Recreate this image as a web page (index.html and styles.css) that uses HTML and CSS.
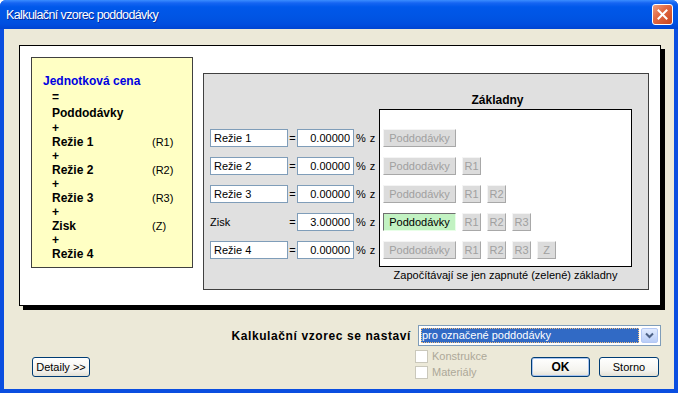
FILE: index.html
```html
<!DOCTYPE html>
<html lang="cs">
<head>
    <meta charset="UTF-8">
    <title>Kalkulační vzorec poddodávky</title>
    <link rel="stylesheet" href="styles.css">
</head>
<body>
<div class="window">
    <!-- Title bar -->
    <div class="titlebar">
        <span class="title">Kalkulační vzorec poddodávky</span>
        <span class="close-btn">
            <svg width="11" height="11" viewBox="0 0 11 11"><path d="M1.5 1.5 L9.5 9.5 M9.5 1.5 L1.5 9.5" stroke="#fff" stroke-width="2" stroke-linecap="square"/></svg>
        </span>
    </div>

    <div class="client">
        <div class="sheet">
            <!-- Formula overview -->
            <div class="formula">
                <div class="f-head">Jednotková cena</div>
                <div class="f-line f-gap">=</div>
                <div class="f-line f-gap">Poddodávky</div>
                <div class="f-line">+</div>
                <div class="f-line"><span class="f-name">Režie 1</span><span class="f-tag">(R1)</span></div>
                <div class="f-line">+</div>
                <div class="f-line"><span class="f-name">Režie 2</span><span class="f-tag">(R2)</span></div>
                <div class="f-line">+</div>
                <div class="f-line"><span class="f-name">Režie 3</span><span class="f-tag">(R3)</span></div>
                <div class="f-line">+</div>
                <div class="f-line"><span class="f-name">Zisk</span><span class="f-tag">(Z)</span></div>
                <div class="f-line">+</div>
                <div class="f-line">Režie 4</div>
            </div>

            <!-- Parameters -->
            <div class="params">
                <div class="param-rows">
                    <div class="prow">
                        <input class="name" type="text" value="Režie 1" readonly>
                        <span class="eq">=</span>
                        <input class="val" type="text" value="0.00000" readonly>
                        <span class="unit">% z</span>
                    </div>
                    <div class="prow">
                        <input class="name" type="text" value="Režie 2" readonly>
                        <span class="eq">=</span>
                        <input class="val" type="text" value="0.00000" readonly>
                        <span class="unit">% z</span>
                    </div>
                    <div class="prow">
                        <input class="name" type="text" value="Režie 3" readonly>
                        <span class="eq">=</span>
                        <input class="val" type="text" value="0.00000" readonly>
                        <span class="unit">% z</span>
                    </div>
                    <div class="prow">
                        <span class="name-label">Zisk</span>
                        <span class="eq">=</span>
                        <input class="val" type="text" value="3.00000" readonly>
                        <span class="unit">% z</span>
                    </div>
                    <div class="prow">
                        <input class="name" type="text" value="Režie 4" readonly>
                        <span class="eq">=</span>
                        <input class="val" type="text" value="0.00000" readonly>
                        <span class="unit">% z</span>
                    </div>
                </div>

                <div class="bases">
                    <div class="bases-head">Základny</div>
                    <div class="bases-box">
                        <div class="brow">
                            <span class="bbtn wide">Poddodávky</span>
                        </div>
                        <div class="brow">
                            <span class="bbtn wide">Poddodávky</span>
                            <span class="bbtn">R1</span>
                        </div>
                        <div class="brow">
                            <span class="bbtn wide">Poddodávky</span>
                            <span class="bbtn">R1</span>
                            <span class="bbtn">R2</span>
                        </div>
                        <div class="brow">
                            <span class="bbtn wide on">Poddodávky</span>
                            <span class="bbtn">R1</span>
                            <span class="bbtn">R2</span>
                            <span class="bbtn">R3</span>
                        </div>
                        <div class="brow">
                            <span class="bbtn wide">Poddodávky</span>
                            <span class="bbtn">R1</span>
                            <span class="bbtn">R2</span>
                            <span class="bbtn">R3</span>
                            <span class="bbtn">Z</span>
                        </div>
                    </div>
                    <div class="bases-note">Započítávají se jen zapnuté (zelené) základny</div>
                </div>
            </div>
        </div>

        <!-- Mode selection -->
        <div class="mode-row">
            <span class="mode-label">Kalkulační vzorec se nastaví</span>
            <div class="select">
                <span class="select-value">pro označené poddodávky</span>
                <span class="select-arrow">
                    <svg width="9" height="7" viewBox="0 0 9 7"><path d="M1 1.5 L4.5 5 L8 1.5" fill="none" stroke="#4d6185" stroke-width="2"/></svg>
                </span>
            </div>
        </div>

        <div class="action-row">
            <button class="xp-btn details">Detaily &gt;&gt;</button>
            <div class="checks">
                <div class="check"><span class="box"></span>Konstrukce</div>
                <div class="check"><span class="box"></span>Materiály</div>
            </div>
            <button class="xp-btn ok">OK</button>
            <button class="xp-btn storno">Storno</button>
        </div>
    </div>
</div>
</body>
</html>
```

FILE: styles.css
```css
* {
    margin: 0;
    padding: 0;
    box-sizing: border-box;
}

body {
    width: 678px;
    height: 393px;
    background-color: #ffffff;
    font-family: 'Liberation Sans', Arial, sans-serif;
    font-size: 11px;
    color: #000;
    overflow: hidden;
}

/* Window frame */
.window {
    width: 678px;
    height: 393px;
    display: flex;
    flex-direction: column;
    background-color: #0a4ee0;
    border-radius: 6px 6px 0 0;
    overflow: hidden;
}

.titlebar {
    height: 29px;
    display: flex;
    align-items: center;
    justify-content: space-between;
    padding: 0 5px 0 6px;
    background: linear-gradient(#3b8dff 0px, #1665f2 3px, #0058ea 7px, #0054e3 18px, #004ee0 24px, #0044d2 29px);
}

.title {
    color: #ffffff;
    font-size: 12.5px;
    letter-spacing: -0.6px;
    text-shadow: 1px 1px 0 #0a2a9a;
}

.close-btn {
    width: 21px;
    height: 21px;
    display: flex;
    align-items: center;
    justify-content: center;
    border: 1px solid #ffffff;
    border-radius: 3px;
    background: linear-gradient(135deg, #f0a080 0%, #e26a44 40%, #c9451e 100%);
}

.client {
    flex: 1;
    margin: 0 4px 4px 4px;
    background-color: #ece9d8;
    display: flex;
    flex-direction: column;
}

/* White sheet with shadow */
.sheet {
    margin: 16px 0 0 15px;
    width: 642px;
    height: 261px;
    padding: 11px;
    display: flex;
    align-items: flex-start;
    background-color: #ffffff;
    border: 1px solid #000;
    box-shadow: 4px 4px 0 #000;
}

/* Yellow formula box */
.formula {
    width: 162px;
    height: 211px;
    padding: 15px 0 0 11px;
    background-color: #ffffc4;
    border: 1px solid #404040;
    font-size: 12px;
    font-weight: bold;
    line-height: 14px;
}

.f-head {
    color: #0000e0;
    line-height: 16px;
}

.f-line {
    display: flex;
    padding-left: 9px;
}

.f-gap {
    line-height: 16px;
}

.f-name {
    width: 100px;
}

.f-tag {
    font-size: 11px;
    font-weight: normal;
}

/* Gray parameters panel */
.params {
    margin: 16px 0 0 10px;
    width: 446px;
    height: 217px;
    padding: 0 15px 0 6px;
    display: flex;
    background-color: #e0e0e0;
    border: 1px solid #404040;
}

.param-rows {
    width: 163px;
    flex-shrink: 0;
    padding-top: 55px;
    display: flex;
    flex-direction: column;
    gap: 10px;
}

.prow {
    height: 18px;
    display: flex;
    align-items: center;
    white-space: nowrap;
}

.prow input {
    flex-shrink: 0;
    height: 18px;
    padding: 0 3px;
    border: 1px solid #7f9db9;
    background-color: #ffffff;
    font-family: 'Liberation Sans', Arial, sans-serif;
    font-size: 11px;
    color: #000;
    outline: none;
}

.name {
    width: 78px;
}

.name-label {
    width: 78px;
    flex-shrink: 0;
}

.eq {
    width: 9px;
    flex-shrink: 0;
    text-align: center;
}

.val {
    width: 57px;
    text-align: right;
}

.unit {
    margin-left: 2px;
    flex-shrink: 0;
    word-spacing: 1px;
}

.bases {
    margin-left: 6px;
    width: 253px;
    flex-shrink: 0;
    padding-top: 18px;
}

.bases-head {
    height: 17px;
    padding-right: 16px;
    text-align: center;
    font-weight: bold;
    font-size: 12px;
    line-height: 16px;
}

.bases-box {
    height: 158px;
    padding: 19px 0 0 3px;
    display: flex;
    flex-direction: column;
    gap: 10px;
    background-color: #ffffff;
    border: 1px solid #000;
}

.brow {
    height: 18px;
    display: flex;
    gap: 6px;
}

.bbtn {
    width: 19px;
    height: 18px;
    display: flex;
    align-items: center;
    justify-content: center;
    background-color: #dcdcdc;
    border: 1px solid;
    border-color: #f4f4f4 #a8a8a8 #a8a8a8 #f4f4f4;
    color: #a0a0a0;
}

.bbtn.wide {
    width: 73px;
}

.bbtn.on {
    background-color: #c2f2c2;
    border-color: #707070 #e8ffe8 #e8ffe8 #707070;
    color: #000;
}

.bases-note {
    height: 16px;
    line-height: 17px;
    text-align: center;
}

/* Bottom controls */
.mode-row {
    margin-top: 19px;
    padding-right: 13px;
    display: flex;
    justify-content: flex-end;
    align-items: center;
}

.mode-label {
    margin-right: 7px;
    font-size: 12px;
    font-weight: bold;
    letter-spacing: 0.6px;
}

.select {
    width: 243px;
    height: 21px;
    padding: 2px;
    display: flex;
    background-color: #ffffff;
    border: 1px solid #7f9db9;
}

.select-value {
    flex: 1;
    margin-right: 2px;
    padding-left: 1px;
    background-color: #316ac5;
    outline: 1px dotted #f0c080;
    outline-offset: -1px;
    color: #ffffff;
    line-height: 15px;
}

.select-arrow {
    width: 17px;
    display: flex;
    align-items: center;
    justify-content: center;
    background: linear-gradient(#e1ebff, #b9cdf7);
    border: 1px solid #b4c8f4;
    border-radius: 2px;
}

.action-row {
    margin-top: 4px;
    padding: 0 15px 0 28px;
    display: flex;
    align-items: flex-start;
}

.xp-btn {
    height: 20px;
    margin-top: 7px;
    border: 1px solid #003c74;
    border-radius: 3px;
    background: linear-gradient(#ffffff, #f4f3ee 70%, #e3e1d6);
    font-family: 'Liberation Sans', Arial, sans-serif;
    font-size: 11px;
    color: #000;
}

.details {
    width: 58px;
}

.checks {
    margin-left: 325px;
    display: flex;
    flex-direction: column;
    gap: 3px;
}

.check {
    height: 13px;
    display: flex;
    align-items: center;
    color: #aca899;
    line-height: 13px;
}

.check .box {
    width: 13px;
    height: 13px;
    margin-right: 4px;
    background-color: #ffffff;
    border: 1px solid #cac8bb;
}

.ok {
    width: 59px;
    margin-left: auto;
    font-weight: bold;
    font-size: 12px;
    box-shadow: inset 0 0 0 1px #a8c4f0;
}

.storno {
    width: 60px;
    margin-left: 9px;
}
```
